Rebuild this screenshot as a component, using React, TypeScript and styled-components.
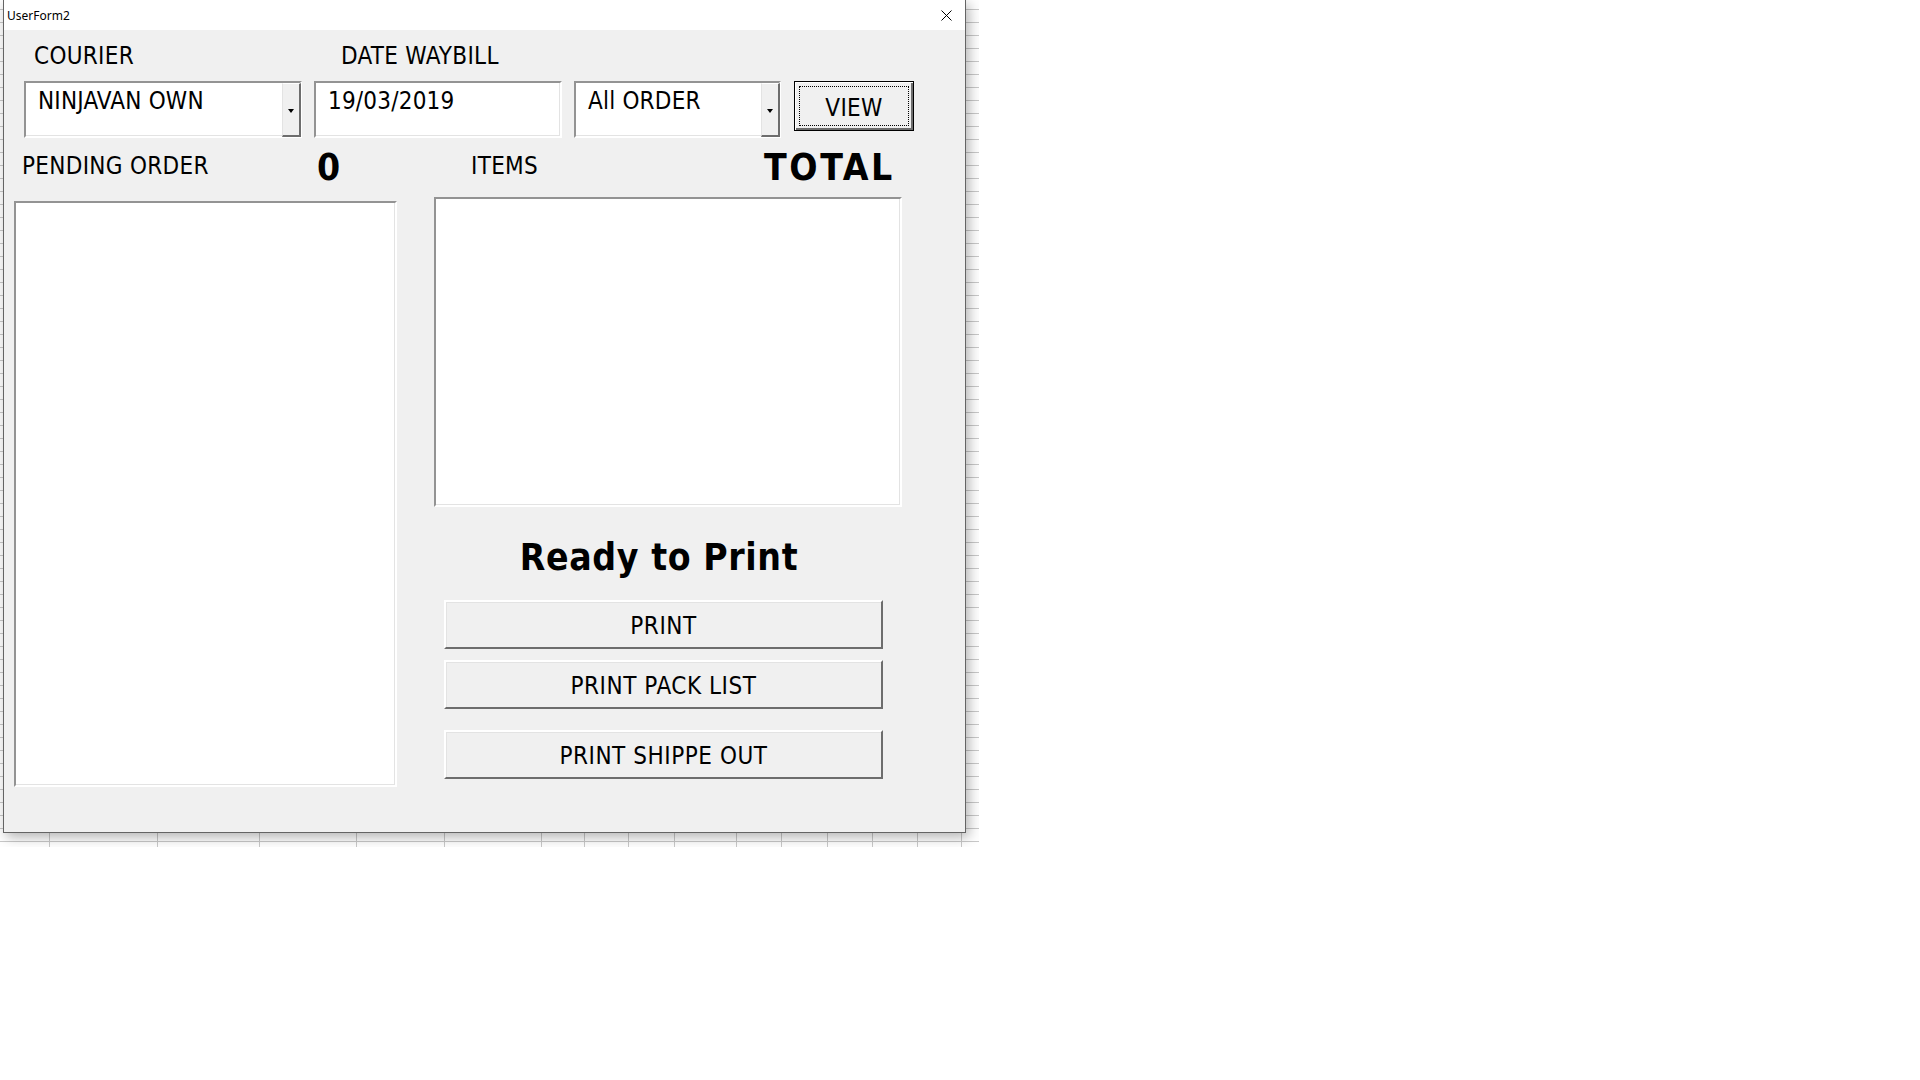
import React from 'react';
import styled, { createGlobalStyle } from 'styled-components';

const sans = `"DejaVu Sans Condensed", "DejaVu Sans", Tahoma, sans-serif`;

// column borders of the worksheet that shows around the form
const columnLines = [49, 157, 259, 356, 444, 541, 584, 628, 674, 736, 781, 827, 872, 917, 961];
const columnGrid = columnLines
  .map(x => `transparent ${x}px, #c9c9c9 ${x}px, #c9c9c9 ${x + 1}px, transparent ${x + 1}px`)
  .join(', ');

const GlobalStyle = createGlobalStyle`
  *, *::before, *::after {
    box-sizing: border-box;
  }

  html, body {
    margin: 0;
    padding: 0;
    background: #ffffff;
  }

  body {
    width: 1920px;
    height: 1080px;
    overflow: hidden;
  }
`;

const Sheet = styled.div`
  width: 979px;
  height: 847px;
  overflow: hidden;
  padding-left: 3px;
  background-color: #ffffff;
  background-image: linear-gradient(to right, transparent 0px, ${columnGrid}),
    repeating-linear-gradient(to bottom, transparent 0px, transparent 9px, #c9c9c9 9px, #c9c9c9 10px, transparent 10px, transparent 13px);
`;

const Window = styled.div`
  width: 963px;
  height: 833px;
  display: flex;
  flex-direction: column;
  background: #f0f0f0;
  border: 1px solid #646464;
  border-top: none;
  box-shadow: 3px 4px 12px rgba(0, 0, 0, 0.3);
`;

const TitleBar = styled.div`
  height: 30px;
  flex-shrink: 0;
  display: flex;
  align-items: center;
  justify-content: space-between;
  padding: 0 13px 0 3px;
  background: #ffffff;
  font: 12px 'Noto Sans', 'Open Sans', sans-serif;
  color: #000;
`;

const CloseIcon = styled.svg`
  width: 11px;
  height: 11px;
`;

const Body = styled.div`
  flex: 1;
  display: flex;
  flex-direction: column;
`;

const LabelRow = styled.div`
  display: grid;
  grid-template-columns: 307px auto;
  padding-left: 30px;
  margin-top: 14px;
`;

const FieldLabel = styled.span<{ $mt?: number }>`
  font: 24px/1 ${sans};
  font-stretch: condensed;
  letter-spacing: 0.3px;
  color: #000;
  white-space: nowrap;
  margin-top: ${p => p.$mt ?? 0}px;
`;

const BigFigure = styled.span<{ $mt?: number; $spacing?: number }>`
  font: bold 37px/1 ${sans};
  font-stretch: condensed;
  letter-spacing: ${p => p.$spacing ?? 0}px;
  color: #000;
  white-space: nowrap;
  margin-top: ${p => p.$mt ?? 0}px;
`;

const ControlsRow = styled.div`
  display: flex;
  align-items: flex-start;
  gap: 12px;
  padding-left: 20px;
  margin-top: 13px;
`;

const sunken = `
  background: #ffffff;
  border-style: solid;
  border-width: 2px;
  border-color: #939393 #ffffff #ffffff #939393;
  box-shadow: inset -1px -1px 0 #e3e3e3;
`;

const Field = styled.div<{ $w: number }>`
  ${sunken}
  width: ${p => p.$w}px;
  height: 57px;
  display: flex;
  align-items: flex-start;
  padding-left: 12px;
`;

const FieldText = styled.span`
  font: 24px/1 ${sans};
  font-stretch: condensed;
  letter-spacing: 0.2px;
  color: #000;
  padding-top: 6px;
  white-space: nowrap;
`;

const DropButton = styled.span`
  width: 19px;
  align-self: stretch;
  margin-left: auto;
  margin-bottom: -1px;
  margin-right: -1px;
  display: flex;
  align-items: center;
  justify-content: center;
  background: #f0f0f0;
  border-style: solid;
  border-width: 1px 2px 2px 1px;
  border-color: #ffffff #6d6d6d #6d6d6d #e3e3e3;

  &::after {
    content: '';
    margin-top: 2px;
    border-left: 3px solid transparent;
    border-right: 3px solid transparent;
    border-top: 4px solid #000;
  }
`;

const ViewButton = styled.button`
  width: 120px;
  height: 50px;
  margin-left: 1px;
  padding: 4px;
  display: flex;
  background: #f0f0f0;
  border: 1px solid #000;
  box-shadow: inset 1px 1px 0 #ffffff, inset -2px -2px 0 #6d6d6d;
  cursor: default;
`;

const FocusRing = styled.span`
  flex: 1;
  display: flex;
  align-items: center;
  justify-content: center;
  padding-top: 3px;
  border: 1px dotted #000;
  font: 24px/1 ${sans};
  font-stretch: condensed;
  letter-spacing: 0.3px;
  color: #000;
`;

const Main = styled.div`
  display: flex;
  padding-left: 10px;
`;

const Column = styled.div<{ $w: number; $ml?: number }>`
  width: ${p => p.$w}px;
  margin-left: ${p => p.$ml ?? 0}px;
  display: flex;
  flex-direction: column;
`;

const HeaderRow = styled.div<{ $h: number; $cols: string; $pl: number }>`
  height: ${p => p.$h}px;
  display: grid;
  grid-template-columns: ${p => p.$cols};
  align-items: start;
  padding-left: ${p => p.$pl}px;
`;

const ListBox = styled.div<{ $h: number }>`
  ${sunken}
  height: ${p => p.$h}px;
`;

const ReadyTitle = styled.div`
  margin-top: 32px;
  padding-right: 18px;
  text-align: center;
  font: bold 37px/1 ${sans};
  font-stretch: condensed;
  letter-spacing: 0.6px;
  color: #000;
`;

const ActionButton = styled.button<{ $mt: number }>`
  width: 439px;
  height: 49px;
  margin: ${p => p.$mt}px 0 0 10px;
  padding: 3px 0 0;
  display: flex;
  align-items: center;
  justify-content: center;
  background: #f0f0f0;
  border-style: solid;
  border-width: 2px;
  border-color: #ffffff #6d6d6d #6d6d6d #ffffff;
  box-shadow: inset 1px 1px 0 #e3e3e3;
  font: 24px/1 ${sans};
  font-stretch: condensed;
  letter-spacing: 0.55px;
  color: #000;
  cursor: default;
`;

const actions = [
  { label: 'PRINT', mt: 24 },
  { label: 'PRINT PACK LIST', mt: 11 },
  { label: 'PRINT SHIPPE OUT', mt: 21 },
];

export default function App() {
  return (
    <>
      <GlobalStyle />
      <Sheet>
        <Window>
          <TitleBar>
            <span>UserForm2</span>
            <CloseIcon viewBox="0 0 11 11">
              <path d="M0.5 0.5 L10.5 10.5 M10.5 0.5 L0.5 10.5" stroke="#000" strokeWidth="1" fill="none" />
            </CloseIcon>
          </TitleBar>
          <Body>
            <LabelRow>
              <FieldLabel>COURIER</FieldLabel>
              <FieldLabel>DATE WAYBILL</FieldLabel>
            </LabelRow>
            <ControlsRow>
              <Field $w={278}>
                <FieldText>NINJAVAN OWN</FieldText>
                <DropButton />
              </Field>
              <Field $w={248}>
                <FieldText>19/03/2019</FieldText>
              </Field>
              <Field $w={207}>
                <FieldText>All ORDER</FieldText>
                <DropButton />
              </Field>
              <ViewButton>
                <FocusRing>VIEW</FocusRing>
              </ViewButton>
            </ControlsRow>
            <Main>
              <Column $w={383}>
                <HeaderRow $h={63} $cols="295px auto" $pl={8}>
                  <FieldLabel $mt={16}>PENDING ORDER</FieldLabel>
                  <BigFigure $mt={11}>0</BigFigure>
                </HeaderRow>
                <ListBox $h={586} />
              </Column>
              <Column $w={468} $ml={37}>
                <HeaderRow $h={59} $cols="293px auto" $pl={37}>
                  <FieldLabel $mt={16}>ITEMS</FieldLabel>
                  <BigFigure $mt={11} $spacing={2.6}>
                    TOTAL
                  </BigFigure>
                </HeaderRow>
                <ListBox $h={310} />
                <ReadyTitle>Ready to Print</ReadyTitle>
                {actions.map(a => (
                  <ActionButton key={a.label} $mt={a.mt}>
                    {a.label}
                  </ActionButton>
                ))}
              </Column>
            </Main>
          </Body>
        </Window>
      </Sheet>
    </>
  );
}
